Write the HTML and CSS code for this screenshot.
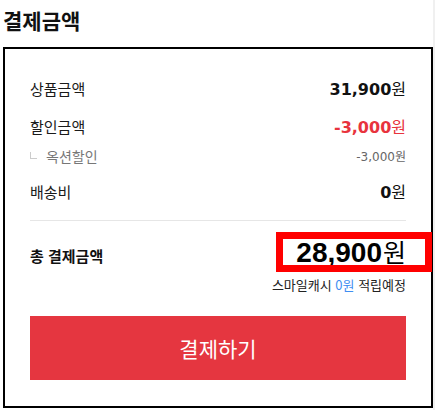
FILE: index.html
```html
<!DOCTYPE html>
<html lang="ko">
<head>
<meta charset="utf-8">
<title>결제금액</title>
<link rel="stylesheet" href="styles.css">
</head>
<body>
<div class="page">
  <h2 class="title">결제금액</h2>
  <div class="box">
    <div class="row">
      <span class="label">상품금액</span>
      <span class="val"><span class="num">31,900</span><span class="won">원</span></span>
    </div>
    <div class="row row-discount">
      <span class="label">할인금액</span>
      <span class="val red"><span class="num">-3,000</span><span class="won">원</span></span>
    </div>
    <div class="sub-row">
      <span class="sub-label"><span class="corner"></span>옥션할인</span>
      <span class="sub-val"><span class="sub-num">-3,000</span>원</span>
    </div>
    <div class="row row-ship">
      <span class="label">배송비</span>
      <span class="val"><span class="num">0</span><span class="won">원</span></span>
    </div>
    <div class="divider"></div>
    <div class="total-row">
      <span class="total-label">총 결제금액</span>
      <span class="total-val"><span class="total-num">28,900</span><span class="total-won">원</span></span>
      <span class="highlight"></span>
    </div>
    <div class="cash-row">스마일캐시 <span class="blue">0원</span> 적립예정</div>
    <button class="pay-btn" type="button">결제하기</button>
  </div>
</div>
</body>
</html>
```

FILE: styles.css
```css
html {
  background: linear-gradient(to left, #f0f0f0 2px, #ffffff 2px);
  min-height: 100%;
}
body {
  margin: 0;
  font-family: "Noto Sans CJK KR", "Noto Sans", sans-serif;
  color: #111;
}
.page {
  width: 430px;
  padding-left: 3px;
}
.title {
  margin: 0;
  padding-top: 5px;
  height: 30px;
  line-height: 30px;
  font-size: 21px;
  font-weight: 700;
  color: #111;
  margin-bottom: 12px;
}
.box {
  border: 2px solid #000;
  padding: 28px 25px 26px;
  display: flex;
  flex-direction: column;
}
.row {
  height: 24px;
  display: flex;
  justify-content: space-between;
  align-items: center;
}
.row-discount { margin-top: 14px; }
.row-ship { margin-top: 15px; }
.label {
  font-size: 15px;
  line-height: 24px;
  color: #1a1a1a;
}
.val {
  display: flex;
  align-items: baseline;
  line-height: 24px;
  color: #111;
}
.num {
  font-family: "DejaVu Sans", sans-serif;
  font-weight: 700;
  font-size: 16px;
}
.won {
  font-size: 16px;
  font-weight: 400;
}
.red { color: #e8333d; }
.sub-row {
  margin-top: 8px;
  height: 18px;
  display: flex;
  justify-content: space-between;
  align-items: center;
  color: #777;
}
.sub-label {
  display: flex;
  align-items: center;
  font-size: 14px;
  line-height: 18px;
}
.corner {
  display: inline-block;
  width: 6px;
  height: 6px;
  border-left: 1px solid #ccc;
  border-bottom: 1px solid #ccc;
  margin-right: 9px;
  margin-bottom: 2px;
}
.sub-val {
  font-size: 12px;
  line-height: 18px;
  color: #666;
}
.sub-num {
  font-family: "DejaVu Sans", sans-serif;
  font-size: 12px;
}
.divider {
  margin-top: 16px;
  height: 1px;
  background: #e6e6e6;
}
.total-row {
  position: relative;
  margin-top: 16px;
  height: 36px;
  display: flex;
  justify-content: space-between;
  align-items: center;
}
.total-label {
  font-size: 15px;
  font-weight: 700;
  color: #111;
}
.total-val {
  display: flex;
  align-items: baseline;
  line-height: 30px;
  padding-bottom: 6px;
  color: #000;
}
.total-num {
  font-family: "Liberation Sans", Arial, sans-serif;
  font-weight: 700;
  font-size: 28px;
}
.total-won {
  font-size: 25px;
  font-weight: 400;
  margin-left: 1px;
}
.highlight {
  position: absolute;
  top: -5px;
  right: -26px;
  width: 156px;
  height: 40px;
  box-sizing: border-box;
  border: 7px solid #ff0000;
}
.cash-row {
  margin-top: 4px;
  height: 16px;
  line-height: 16px;
  text-align: right;
  font-size: 13px;
  color: #222;
}
.blue { color: #3f8ef2; }
.pay-btn {
  margin-top: 23px;
  height: 64px;
  border: 0;
  background: #e53640;
  color: #fff;
  font-family: "Noto Sans CJK KR", "Noto Sans", sans-serif;
  font-size: 21px;
  font-weight: 400;
  padding: 0;
}
```
